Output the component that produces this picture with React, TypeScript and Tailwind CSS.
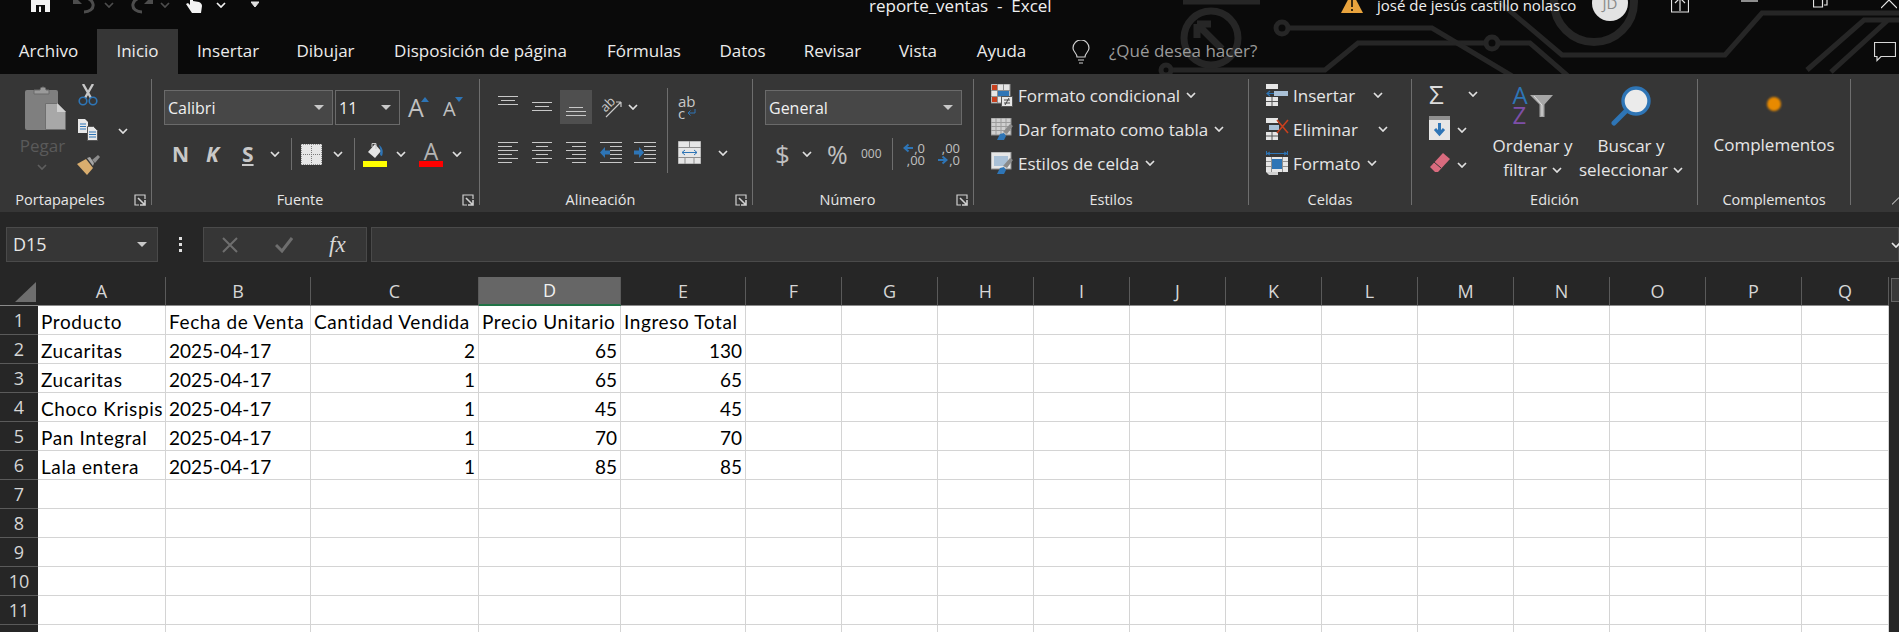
import React from "react";

const ui = "font-['Open_Sans',sans-serif]";

function Chev({ className = "text-[#e0e0e0]" }: { className?: string }) {
  return (
    <svg width="10" height="6" viewBox="0 0 10 6" className={`shrink-0 ${className}`}>
      <path d="M1 1l4 4 4-4" stroke="currentColor" strokeWidth="1.7" fill="none" />
    </svg>
  );
}

function Caret() {
  return (
    <svg width="10" height="5" viewBox="0 0 10 5" className="shrink-0">
      <path d="M0 0h10L5 5z" fill="#c8c8c8" />
    </svg>
  );
}

function Launcher() {
  return (
    <svg width="12" height="12" viewBox="0 0 12 12" className="shrink-0">
      <path d="M11 5V1H1v10h4" stroke="#d0d0d0" strokeWidth="1.2" fill="none" />
      <path d="M4 4l7 7M6 11h5V6" stroke="#d0d0d0" strokeWidth="1.6" fill="none" />
    </svg>
  );
}

function Group({ w, label, launcher, children }: { w: string; label: string; launcher?: boolean; children: React.ReactNode }) {
  return (
    <div className="flex shrink-0">
      <div className={`flex flex-col ${w}`}>
        <div className="h-[111px]">{children}</div>
        <div className="flex h-[20px] items-center">
          <span className="flex-1 text-center text-[14.500px] leading-none text-[#e6e6e6]">{label}</span>
          {launcher && (
            <span className="ml-[14px] mr-[5px] flex">
              <Launcher />
            </span>
          )}
        </div>
      </div>
      <div className="h-[126px] w-px bg-[#6e6e6e]" />
    </div>
  );
}

// horizontal text-alignment lines
function Lines({ rows, color = "#c8c8c8", w = 20, h = 35 }: { rows: number[][]; color?: string; w?: number; h?: number }) {
  return (
    <svg width={w} height={h} viewBox={`0 0 ${w} ${h}`} className="shrink-0">
      {rows.map(([y, a, b], i) => (
        <path key={i} d={`M${a} ${y + 0.5}H${b}`} stroke={color} />
      ))}
    </svg>
  );
}

function Clipboard() {
  return (
    <svg width="41" height="45" viewBox="0 0 41 45">
      <rect x="0" y="5" width="33" height="40" rx="2" fill="#7f7f7f" />
      <path d="M9 9V5h6a3 3 0 0 1 6 0h3v4z" fill="#9a9a9a" stroke="#6a6a6a" />
      <path d="M20.5 18.5h12l8 8v18h-20z" fill="#a8a8a8" stroke="#6f6f6f" />
      <path d="M32 18v9h9z" fill="#d0d0d0" />
    </svg>
  );
}

function Scissors() {
  return (
    <svg width="20" height="22" viewBox="0 0 20 22">
      <path d="M5 0l8 14M15 0L7 14" stroke="#c8c8c8" strokeWidth="2.4" />
      <circle cx="5" cy="17" r="3.8" fill="none" stroke="#2e75b6" strokeWidth="1.6" />
      <circle cx="15" cy="17" r="3.8" fill="none" stroke="#2e75b6" strokeWidth="1.6" />
    </svg>
  );
}

function CopyIcon() {
  return (
    <svg width="20" height="22" viewBox="0 0 20 22">
      <path d="M0 0h7l3 3v11H0z" fill="#e8e8e8" />
      <path d="M2 5h6M2 7.5h6M2 10h6" stroke="#2e75b6" />
      <path d="M9.500 7.500h6l4 4v10h-10z" fill="#e8e8e8" stroke="#555" />
      <path d="M11 13h7M11 15.500h7M11 18h7" stroke="#2e75b6" />
    </svg>
  );
}

function Brush() {
  return (
    <svg width="23" height="20" viewBox="0 0 23 20">
      <path d="M0 9l9-5 7 9-6 7z" fill="#d9ad6e" />
      <path d="M10 3l3-1 4 6-1 3z" fill="#a6a6a6" />
      <path d="M15 5l6-5 2 2-5 6z" fill="#8c8c8c" />
    </svg>
  );
}

function BordersIcon() {
  return (
    <svg width="21" height="21" viewBox="0 0 21 21">
      <rect width="21" height="21" fill="#e6e6e6" />
      <path d="M10.500 0v21M0 10.500h21" stroke="#7a7a7a" strokeDasharray="1 1" />
      <path d="M.5 0v21M20.500 0v21M0 .5h21M0 20.500h21" stroke="#8f8f8f" strokeDasharray="1 1" />
    </svg>
  );
}

function Bucket() {
  return (
    <svg width="18" height="18" viewBox="0 0 18 18">
      <path d="M2 10l7-8 6 7-6 7z" fill="#e6e6e6" />
      <path d="M6 5V1.500h4V7" stroke="#c8c8c8" fill="none" />
      <path d="M13 3c3 2 5 6 3 11-1 0-2-1-2-2 1-3 0-6-1-9z" fill="#2e75b6" />
    </svg>
  );
}

function Orientation() {
  return (
    <svg width="22" height="22" viewBox="0 0 22 22">
      <path d="M5 21L20 6M20 6h-5M20 6v5" stroke="#c8c8c8" strokeWidth="1.2" fill="none" />
      <g fontSize="13" fill="#c8c8c8" transform="rotate(-45 8 9)" fontFamily="Open Sans">
        <text x="0" y="12">ab</text>
      </g>
    </svg>
  );
}

function Outdent({ flip }: { flip?: boolean }) {
  return (
    <svg width="22" height="21" viewBox="0 0 22 21" className="shrink-0">
      <path d="M0 .5h22M10 4.500h12M10 8.500h12M10 12.500h12M10 16.500h12M0 20.500h22" stroke="#c8c8c8" />
      {flip ? (
        <path d="M0 8.500h5V5l5 5.500-5 5.500v-3.500H0z" fill="#2e75b6" />
      ) : (
        <path d="M10 8.500H5V5L0 10.500 5 16v-3.500h5z" fill="#2e75b6" />
      )}
    </svg>
  );
}

function MergeIcon() {
  return (
    <svg width="23" height="23" viewBox="0 0 23 23" className="shrink-0">
      <rect width="23" height="23" fill="#e6e6e6" stroke="#8f8f8f" />
      <path d="M0 6.500h23M0 16.500h23M11.500 0v6M7 17v6M16 17v6" stroke="#8f8f8f" />
      <path d="M4 11.500h15M7 9l-3 2.500L7 14M16 9l3 2.500L16 14" stroke="#2e75b6" fill="none" />
    </svg>
  );
}

function CondFormat() {
  return (
    <svg width="22" height="23" viewBox="0 0 22 23" className="shrink-0">
      <rect width="19" height="19" fill="#e6e6e6" stroke="#8f8f8f" />
      <path d="M6.500 0v19M12.500 0v19M0 6.500h19M0 12.500h19" stroke="#8f8f8f" />
      <rect x="1" y="1" width="5" height="5" fill="#c8401e" />
      <rect x="1" y="13" width="5" height="5" fill="#c8401e" />
      <rect x="7" y="7" width="11" height="5" fill="#2e75b6" />
      <rect x="10.500" y="12.500" width="11" height="10" fill="#e6e6e6" stroke="#555" />
      <path d="M13 16h6M13 19h6M18 14l-4 7" stroke="#444" />
    </svg>
  );
}

function TableFormat({ plain }: { plain?: boolean }) {
  return (
    <svg width="22" height="22" viewBox="0 0 22 22" className="shrink-0">
      <rect width="20" height="17" fill={plain ? "#e6e6e6" : "#d0d0d0"} stroke="#8f8f8f" />
      {plain ? (
        <rect x="3" y="4" width="14" height="10" fill="#a9c0d6" />
      ) : (
        <path d="M0 4.500h20M0 8.500h20M0 12.500h20M5 0v17M10 0v17M15 0v17" stroke="#9c9c9c" />
      )}
      <path d="M12 14l7-8 3 2-6 8z" fill="#8a8a8a" />
      <path d="M6 22l3-6 4-1 2 3-2 4z" fill="#2e75b6" />
    </svg>
  );
}

function InsertIcon() {
  return (
    <svg width="22" height="22" viewBox="0 0 22 22" className="shrink-0">
      <path d="M0 0h12v5H0zM0 13h12v9H0z" fill="#e6e6e6" />
      <path d="M0 17.500h12M6 13v9" stroke="#555" />
      <rect x="8" y="7" width="14" height="5" fill="#a9c0d6" />
      <path d="M8 9.500H1M4 7L1 9.500 4 12" stroke="#2e75b6" strokeWidth="1.2" fill="none" />
    </svg>
  );
}

function DeleteIcon() {
  return (
    <svg width="23" height="22" viewBox="0 0 23 22" className="shrink-0">
      <path d="M0 0h12v5H0zM0 14h12v8H0z" fill="#e6e6e6" />
      <path d="M0 18h12M6 14v8" stroke="#555" />
      <rect x="3" y="7" width="10" height="5" fill="#a9c0d6" />
      <path d="M11 2l11 13M22 2L11 15" stroke="#c8401e" strokeWidth="1.6" />
    </svg>
  );
}

function FormatIcon() {
  return (
    <svg width="22" height="24" viewBox="0 0 22 24" className="shrink-0">
      <path d="M.5 0v4M21.500 0v4M1 2.500h20M4 1L1 2.500 4 4M18 1l3 1.500L18 4" stroke="#2e75b6" fill="none" />
      <rect x="0" y="6" width="22" height="15" fill="#e6e6e6" />
      <path d="M5.500 6v15M16.500 6v15M0 10.500h22M0 15.500h22" stroke="#8f8f8f" />
      <rect x="6" y="8" width="10" height="10" fill="#2e75b6" />
      <path d="M0 21h12v3H3z" fill="#d0d0d0" />
    </svg>
  );
}

function Funnel() {
  return (
    <svg width="23" height="22" viewBox="0 0 23 22">
      <path d="M0 0h23l-8.500 9.500V22h-5V9.500z" fill="#a6a6a6" />
      <path d="M4 1l8 9v11" stroke="#e0e0e0" fill="none" />
    </svg>
  );
}

function Search() {
  return (
    <svg width="40" height="40" viewBox="0 0 40 40">
      <circle cx="25" cy="15" r="13" fill="#ebebeb" stroke="#2e75b6" strokeWidth="3.4" />
      <path d="M15 25L3 37" stroke="#2e75b6" strokeWidth="5" strokeLinecap="round" />
    </svg>
  );
}

function Eraser() {
  return (
    <svg width="21" height="20" viewBox="0 0 21 20">
      <path d="M14 0l7 6L9 19H6l-5-5z" fill="#d96b7e" />
      <path d="M5 9l7 6" stroke="#363636" />
    </svg>
  );
}

function BlueArrow({ right }: { right?: boolean }) {
  return (
    <svg width="10" height="10" viewBox="0 0 10 10" className="shrink-0">
      <path d={right ? "M0 5h8M4.500 1.500L8.500 5l-4 3.500" : "M10 5H2M5.500 1.500L1.500 5l4 3.500"} stroke="#2e75b6" strokeWidth="2" fill="none" />
    </svg>
  );
}

function Portapapeles() {
  return (
    <div className="flex">
      <div className="ml-[25px] flex w-[41px] flex-col items-center pt-[6px]">
        <Clipboard />
        <span className="-ml-[6px] mt-[5px] text-[17px] leading-[22px] text-[#5a5a5a]">Pegar</span>
        <span className="-ml-[8px] mt-[7px]"><Chev className="text-[#5e5e5e]" /></span>
      </div>
      <div className="ml-[12px] flex w-[23px] flex-col items-start pt-[5px]">
        <Scissors />
        <span className="mt-[13px]"><CopyIcon /></span>
        <span className="-ml-px mt-[14px]"><Brush /></span>
      </div>
      <div className="ml-[17px] pt-[49px]">
        <Chev />
      </div>
    </div>
  );
}

function Fuente() {
  return (
    <div className="flex flex-col pt-[11px]">
      <div className="flex h-[35px] items-start pl-[12px]">
        <div className="flex h-[35px] w-[169px] items-center justify-between border border-[#6a6a6a] bg-[#474747] pl-[3px] pr-[8px] text-[16px] text-[#f0f0f0]">
          Calibri
          <Caret />
        </div>
        <div className="ml-[2px] flex h-[35px] w-[65px] items-center justify-between border border-[#6a6a6a] pl-[3px] pr-[8px] text-[16px] text-[#f0f0f0]">
          11
          <Caret />
        </div>
        <div className="ml-[8px] flex h-[35px] w-[13px] items-center text-[25px] font-medium leading-none text-[#c0c0c0]">A</div>
        <svg width="8" height="5" viewBox="0 0 8 5" className="mt-[7px]"><path d="M0 5l4-5 4 5z" fill="#2e75b6" /></svg>
        <div className="ml-[14px] flex h-[35px] w-[12px] items-center pt-[2px] text-[20px] font-medium leading-none text-[#c0c0c0]">A</div>
        <svg width="8" height="5" viewBox="0 0 8 5" className="mt-[7px]"><path d="M0 0h8L4 5z" fill="#2e75b6" /></svg>
      </div>
      <div className="mt-[13px] flex h-[32px] items-center pl-[20px] text-[#c8c8c8]">
        <span className="w-[15px] text-[21px] font-bold leading-none">N</span>
        <span className="ml-[19px] w-[15px] text-[21px] font-bold italic leading-none">K</span>
        <span className="ml-[21px] w-[12px] text-[21px] font-bold leading-none underline underline-offset-2">S</span>
        <span className="ml-[16px]"><Chev /></span>
        <div className="ml-[11px] h-[32px] w-px bg-[#6e6e6e]" />
        <span className="ml-[9px]"><BordersIcon /></span>
        <span className="ml-[11px]"><Chev /></span>
        <div className="ml-[11px] h-[32px] w-px bg-[#6e6e6e]" />
        <div className="ml-[8px] flex w-[24px] flex-col items-center">
          <Bucket />
          <div className="mt-px h-[6px] w-[24px] bg-[#ffff00]" />
        </div>
        <span className="ml-[9px]"><Chev /></span>
        <div className="ml-[13px] flex w-[24px] flex-col items-center">
          <span className="h-[18px] text-[23px] font-normal leading-[18px] text-[#b4b4b4]">A</span>
          <div className="mt-px h-[6px] w-[24px] bg-[#ff0000]" />
        </div>
        <span className="ml-[9px]"><Chev /></span>
      </div>
    </div>
  );
}

const sixLines = (o: number[][]) => o.map(([a, b], i) => [i * 4, a, b]);

function Alineacion() {
  return (
    <div className="flex pt-[11px]">
      <div className="flex flex-col">
        <div className="flex h-[35px] items-start pl-[18px]">
          <Lines rows={[[6, 0, 20], [10, 3, 17], [14, 0, 20]]} />
          <span className="ml-[14px]"><Lines rows={[[12, 0, 20], [16, 3, 17], [20, 0, 20]]} /></span>
          <div className="ml-[8px] flex h-[34px] w-[32px] justify-center bg-[#4f4f4f]">
            <Lines rows={[[17, 3, 17], [21, 0, 20], [25, 0, 20]]} />
          </div>
          <span className="ml-[9px] mt-[6px]"><Orientation /></span>
          <span className="ml-[5px] mt-[14px]"><Chev /></span>
        </div>
        <div className="mt-[17px] flex items-start pl-[18px]">
          <Lines h={21} rows={sixLines([[0, 20], [0, 14], [0, 20], [0, 14], [0, 20], [0, 14]])} />
          <span className="ml-[14px]"><Lines h={21} rows={sixLines([[0, 20], [4, 16], [0, 20], [4, 16], [0, 20], [4, 16]])} /></span>
          <span className="ml-[14px]"><Lines h={21} rows={sixLines([[0, 20], [6, 20], [0, 20], [6, 20], [0, 20], [6, 20]])} /></span>
          <span className="ml-[14px]"><Outdent /></span>
          <span className="ml-[12px]"><Outdent flip /></span>
        </div>
      </div>
      <div className="ml-[11px] -mt-[2px] h-[85px] w-px shrink-0 bg-[#6e6e6e]" />
      <div className="ml-[10px] flex flex-col">
        <div className="flex h-[35px] flex-col pt-[5px] text-[15px] leading-[12px] text-[#c8c8c8]">
          <span>ab</span>
          <span className="flex items-center">c<span className="ml-[2px]"><svg width="9" height="8" viewBox="0 0 9 8"><path d="M8 0v4H1M3.500 1.500L1 4l2.500 2.500" stroke="#2e75b6" fill="none" /></svg></span></span>
        </div>
        <div className="mt-[16px] flex items-center">
          <MergeIcon />
          <span className="ml-[17px]"><Chev /></span>
        </div>
      </div>
    </div>
  );
}

function Numero() {
  return (
    <div className="flex flex-col pt-[11px]">
      <div className="ml-[12px] flex h-[35px] w-[197px] items-center justify-between border border-[#6a6a6a] bg-[#474747] pl-[3px] pr-[8px] text-[16px] text-[#f0f0f0]">
        General
        <Caret />
      </div>
      <div className="mt-[13px] flex h-[32px] items-center pl-[22px] text-[#c0c0c0]">
        <span className="w-[13px] text-[26px] leading-none">$</span>
        <span className="ml-[14px]"><Chev /></span>
        <span className="ml-[15px] w-[22px] text-[25px] leading-none">%</span>
        <span className="ml-[12px] w-[22px] text-[12px] leading-none">000</span>
        <div className="ml-[9px] h-[32px] w-px bg-[#6e6e6e]" />
        <div className="ml-[8px] flex w-[24px] flex-col items-end text-[13px] leading-[12px]">
          <span className="flex items-center"><BlueArrow /><span className="ml-px">,0</span></span>
          <span>,00</span>
        </div>
        <div className="ml-[11px] flex w-[24px] flex-col items-end text-[13px] leading-[12px]">
          <span>,00</span>
          <span className="flex items-center"><BlueArrow right /><span className="ml-px">,0</span></span>
        </div>
      </div>
    </div>
  );
}

function Estilos() {
  const rows: [React.ReactNode, string][] = [
    [<CondFormat />, "Formato condicional"],
    [<TableFormat />, "Dar formato como tabla"],
    [<TableFormat plain />, "Estilos de celda"],
  ];
  return (
    <div className="-mt-px flex flex-col pl-[17px] text-[17px] text-[#e6e6e6]">
      {rows.map(([icon, label]) => (
        <div key={label} className="flex h-[34px] items-center">
          <span className="flex w-[27px]">{icon}</span>
          <span className="leading-none">{label}</span>
          <span className="ml-[6px]"><Chev /></span>
        </div>
      ))}
    </div>
  );
}

function Celdas() {
  const rows: [React.ReactNode, string, string][] = [
    [<InsertIcon />, "Insertar", "ml-[18px]"],
    [<DeleteIcon />, "Eliminar", "ml-[20px]"],
    [<FormatIcon />, "Formato", "ml-[7px]"],
  ];
  return (
    <div className="-mt-px flex flex-col pl-[17px] text-[17px] text-[#e6e6e6]">
      {rows.map(([icon, label, chev]) => (
        <div key={label} className="flex h-[34px] items-center">
          <span className="flex w-[27px]">{icon}</span>
          <span className="leading-none">{label}</span>
          <span className={chev}><Chev /></span>
        </div>
      ))}
    </div>
  );
}

function Edicion() {
  return (
    <div className="flex">
      <div className="ml-[17px] flex w-[60px] flex-col">
        <div className="flex h-[30px] items-center">
          <span className="w-[20px] text-[26px] leading-none text-[#dcdcdc]">Σ</span>
          <span className="ml-[19px]"><Chev /></span>
        </div>
        <div className="mt-[7px] flex h-[24px] items-center">
          <svg width="21" height="24" viewBox="0 0 21 24">
            <rect width="21" height="24" fill="#e6e6e6" />
            <rect width="21" height="4" fill="#8f8f8f" />
            <path d="M10.500 7v11M6 13l4.500 5 4.500-5" stroke="#2e75b6" strokeWidth="3" fill="none" />
          </svg>
          <span className="ml-[7px] mt-[3px]"><Chev /></span>
        </div>
        <div className="mt-[13px] flex h-[20px] items-center">
          <Eraser />
          <span className="ml-[7px] mt-[3px]"><Chev /></span>
        </div>
      </div>
      <div className="ml-[4px] flex w-[79px] flex-col items-center">
        <div className="flex h-[53px] pt-[6px]">
          <div className="flex flex-col text-[24px] leading-[20px]">
            <span className="text-[#2e75b6]">A</span>
            <span className="text-[#7e4fa8]">Z</span>
          </div>
          <span className="ml-[2px] mt-[10px]"><Funnel /></span>
        </div>
        <span className="mt-[2px] whitespace-nowrap text-[17px] leading-[24px] text-[#e6e6e6]">Ordenar y</span>
        <span className="flex items-center text-[17px] leading-[24px] text-[#e6e6e6]">filtrar<span className="ml-[5px]"><Chev /></span></span>
      </div>
      <div className="flex w-[118px] flex-col items-center">
        <div className="h-[53px] pt-[7px]">
          <Search />
        </div>
        <span className="mt-[2px] text-[17px] leading-[24px] text-[#e6e6e6]">Buscar y</span>
        <span className="flex items-center text-[17px] leading-[24px] text-[#e6e6e6]">seleccionar<span className="ml-[5px]"><Chev /></span></span>
      </div>
    </div>
  );
}

function Complementos() {
  return (
    <div className="flex flex-col items-center">
      <div className="mt-[18px] h-[14px] w-[14px] rounded-full bg-[#e88a00] blur-[1px]" />
      <span className="mt-[22px] text-[17px] leading-[24px] text-[#e6e6e6]">Complementos</span>
    </div>
  );
}

function Circuit() {
  return (
    <svg width="1899" height="74" viewBox="0 0 1899 74" className="absolute left-0 top-0" fill="none" stroke="#262626" strokeWidth="5">
      <path d="M1183 2H1260M1171 70H1325L1358 43H1486" />
      <circle cx="1166" cy="70" r="5" />
      <circle cx="1211" cy="38" r="27" strokeWidth="7" />
      <path d="M1200 27l22 22M1197 24h14M1197 24v14" strokeWidth="7" />
      <circle cx="1282" cy="28" r="6" />
      <path d="M1288 28H1432L1512 76" />
      <circle cx="1492" cy="43" r="6" />
      <path d="M1498 43H1530L1568 76M1497 0L1562 55H1725L1762 13H1899" />
      <circle cx="1594" cy="2" r="40" strokeWidth="8" />
      <path d="M1807 70L1864 20H1899M1831 72L1888 20" />
    </svg>
  );
}

function TitleRow() {
  // svgs use a viewBox shifted 10px up, the window's top edge is cropped off
  return (
    <div className="h-[29px] overflow-hidden">
      <div className="-mt-[10px] flex h-[30px] items-center pl-[31px]">
        <svg width="19" height="30" viewBox="0 -10 19 30">
          <path d="M0-8h15l4 4v16H0z" fill="#f2f2f2" />
          <path d="M5 5h9v7H5z" fill="#0a0a0a" />
          <path d="M8 6.500h2V12H8z" fill="#f2f2f2" />
        </svg>
        <svg width="22" height="30" viewBox="0 -10 22 30" className="ml-[23px]">
          <path d="M1 1c4-5 17-5 19 3 1 5-4 8-9 8" stroke="#4d4d4d" strokeWidth="3" fill="none" />
          <path d="M0 -5v9h9" fill="#4d4d4d" />
        </svg>
        <span className="ml-[9px]"><Chev className="text-[#4d4d4d]" /></span>
        <svg width="22" height="30" viewBox="0 -10 22 30" className="ml-[17px]">
          <path d="M21 1c-4-5-17-5-19 3-1 5 4 8 9 8" stroke="#4d4d4d" strokeWidth="3" fill="none" />
          <path d="M22 -5v9h-9" fill="#4d4d4d" />
        </svg>
        <span className="ml-[7px]"><Chev className="text-[#4d4d4d]" /></span>
        <svg width="16" height="30" viewBox="0 -10 16 30" className="ml-[16px]">
          <path d="M4-8h3v9l6 1c2 1 3 2 3 4l-1 7H6L0 4l2-1 2 2z" fill="#f2f2f2" />
        </svg>
        <span className="ml-[14px]"><Chev className="text-[#f2f2f2]" /></span>
        <svg width="8" height="30" viewBox="0 -10 8 30" className="ml-[25px]">
          <path d="M0-2h8M0 2h8L4 7z" stroke="#e0e0e0" fill="#e0e0e0" />
        </svg>
        <span className="ml-[610px] w-[180px] whitespace-pre text-center text-[17px] leading-none text-[#f0f0f0]">reporte_ventas  -  Excel</span>
        <svg width="22" height="30" viewBox="0 -10 22 30" className="ml-[292px]">
          <path d="M11-8L22 13H0z" fill="#e8a33d" />
          <path d="M11-1v8M11 9v2" stroke="#3a2a10" strokeWidth="2" />
        </svg>
        <span className="ml-[14px] w-[202px] whitespace-nowrap text-[15px] leading-none text-[#f0f0f0]">josé de jesús castillo nolasco</span>
        <div className="ml-[13px] flex h-[36px] w-[36px] shrink-0 -translate-y-[2px] items-center justify-center rounded-full bg-[#e3e3e3] text-[15px] text-[#8a8a8a]">JD</div>
        <svg width="18" height="30" viewBox="0 -10 18 30" className="ml-[43px]">
          <path d="M.5-4v16h17V-4M9 11V-2M4 3l5-5 5 5" stroke="#e6e6e6" strokeWidth="1.2" fill="none" />
        </svg>
        <svg width="17" height="30" viewBox="0 -10 17 30" className="ml-[52px]">
          <path d="M0 1h17" stroke="#e6e6e6" strokeWidth="1.2" />
        </svg>
        <svg width="15" height="30" viewBox="0 -10 15 30" className="ml-[55px]">
          <path d="M.5-2v9h9v-9zM3-5h11v10h-3" stroke="#e6e6e6" strokeWidth="1.2" fill="none" />
        </svg>
        <svg width="16" height="30" viewBox="0 -10 16 30" className="ml-[53px]">
          <path d="M0-8l16 16M16-8L0 8" stroke="#e6e6e6" strokeWidth="1.2" />
        </svg>
      </div>
    </div>
  );
}

const tabs: [string, string][] = [
  ["Archivo", "w-[97px]"],
  ["Inicio", "w-[81px] bg-[#363636]"],
  ["Insertar", "w-[100px]"],
  ["Dibujar", "w-[95px]"],
  ["Disposición de página", "w-[215px]"],
  ["Fórmulas", "w-[112px]"],
  ["Datos", "w-[85px]"],
  ["Revisar", "w-[95px]"],
  ["Vista", "w-[76px]"],
  ["Ayuda", "w-[91px]"],
];

function TabRow() {
  return (
    <div className="flex h-[45px] items-stretch text-[17px] text-[#ececec]">
      {tabs.map(([name, cls]) => (
        <div key={name} className={`flex items-center justify-center pb-[2px] ${cls}`}>{name}</div>
      ))}
      <svg width="18" height="24" viewBox="0 0 18 24" className="ml-[25px] mt-[11px]" fill="none" stroke="#d0d0d0" strokeWidth="1.2">
        <path d="M5 17c0-4-4-5-4-9a8 8 0 0 1 16 0c0 4-4 5-4 9z" />
        <path d="M6 20h6M7 23h4" />
      </svg>
      <span className="ml-[19px] flex w-[150px] items-center whitespace-nowrap pb-[2px] text-[#9a9a9a]">¿Qué desea hacer?</span>
      <svg width="22" height="20" viewBox="0 0 22 20" className="ml-auto mr-[3px] mt-[13px]" fill="none" stroke="#d8d8d8" strokeWidth="1.2">
        <path d="M.5.5h21v14H7l-4 4v-4H.5z" />
      </svg>
    </div>
  );
}

function FormulaBar() {
  return (
    <div className="flex h-[65px] items-start bg-[#262626] pl-[6px] pt-[15px]">
      <div className="flex h-[35px] w-[152px] items-center justify-between border border-[#4a4a4a] bg-[#363636] pl-[6px] pr-[10px] text-[18px] text-[#e6e6e6]">
        D15
        <Caret />
      </div>
      <div className="ml-[20px] flex h-[35px] w-[4px] flex-col items-center justify-center gap-[3px]">
        <span className="h-[3px] w-[3px] bg-[#e0e0e0]" />
        <span className="h-[3px] w-[3px] bg-[#e0e0e0]" />
        <span className="h-[3px] w-[3px] bg-[#e0e0e0]" />
      </div>
      <div className="ml-[21px] flex h-[35px] w-[164px] items-center border border-[#4a4a4a] bg-[#363636] pl-[18px]">
        <svg width="16" height="16" viewBox="0 0 16 16"><path d="M1 1l14 14M15 1L1 15" stroke="#6e6e6e" strokeWidth="2" /></svg>
        <svg width="18" height="16" viewBox="0 0 18 16" className="ml-[37px]"><path d="M1 8l6 6L17 1" stroke="#6e6e6e" strokeWidth="3" fill="none" /></svg>
        <span className="ml-[36px] font-['Liberation_Serif',serif] text-[23px] italic leading-none text-[#d8d8d8]">fx</span>
      </div>
      <div className="ml-[4px] flex h-[35px] flex-1 items-center justify-end border border-[#4a4a4a] bg-[#363636]">
        <Chev className="-mr-[3px] text-[#e6e6e6]" />
      </div>
    </div>
  );
}

const colWidths = [128, 145, 168, 142, 125, 96, 96, 96, 96, 96, 96, 96, 96, 96, 96, 96, 87];
const letters = "ABCDEFGHIJKLMNOPQ".split("");

const data: (string | number)[][] = [
  ["Producto", "Fecha de Venta", "Cantidad Vendida", "Precio Unitario", "Ingreso Total"],
  ["Zucaritas", "2025-04-17", 2, 65, 130],
  ["Zucaritas", "2025-04-17", 1, 65, 65],
  ["Choco Krispis", "2025-04-17", 1, 45, 45],
  ["Pan Integral", "2025-04-17", 1, 70, 70],
  ["Lala entera", "2025-04-17", 1, 85, 85],
];

function cellAlign(v: string | number | undefined) {
  if (typeof v === "number") return "justify-end";
  if (v && !/^\d/.test(v)) return "tracking-[0.6px]";
  return "";
}

function Sheet() {
  return (
    <div className="flex bg-[#262626]">
      <div className="w-[1889px] shrink-0">
        <div className="flex h-[29px]">
          <div className="flex w-[38px] items-end justify-end border-b border-[#8a8a8a] pb-[3px] pr-[2px]">
            <svg width="21" height="20" viewBox="0 0 21 20"><path d="M21 0v20H0z" fill="#6e6e6e" /></svg>
          </div>
          {letters.map((l, i) => (
            <div
              key={l}
              style={{ width: colWidths[i] }}
              className={`flex items-center justify-center border-r border-[#5a5a5a] text-[18px] text-[#d6d6d6] ${l === "D" ? "border-b-2 border-b-[#217346] bg-[#666666] text-[#f0f0f0]" : "border-b border-b-[#8a8a8a]"}`}
            >
              {l}
            </div>
          ))}
        </div>
        {Array.from({ length: 12 }, (_, r) => (
          <div key={r} className="flex h-[29px]">
            <div className="flex w-[38px] items-center justify-center border-b border-[#5a5a5a] text-[18px] text-[#d6d6d6]">{r + 1}</div>
            {colWidths.map((w, c) => {
              const v = data[r]?.[c];
              return (
                <div
                  key={c}
                  style={{ width: w }}
                  className={`flex items-center whitespace-nowrap border-b border-r border-[#d4d4d4] bg-white px-[3px] pt-[3px] font-['Lato',sans-serif] text-[19px] leading-none text-black ${cellAlign(v)}`}
                >
                  {v}
                </div>
              );
            })}
          </div>
        ))}
      </div>
      <div className="ml-[2px] flex-1 pt-px">
        <div className="h-[24px] border border-r-0 border-[#666666] bg-[#3a3a3a]" />
      </div>
    </div>
  );
}

export default function App() {
  return (
    <div className={`h-[632px] w-[1899px] overflow-hidden bg-[#262626] ${ui}`}>
      <div className="relative h-[74px] overflow-hidden bg-[#0a0a0a]">
        <Circuit />
        <div className="relative">
          <TitleRow />
          <TabRow />
        </div>
      </div>
      <div className="flex h-[138px] bg-[#363636] pt-[5px]">
        <Group w="w-[151px]" label="Portapapeles" launcher><Portapapeles /></Group>
        <Group w="w-[327px]" label="Fuente" launcher><Fuente /></Group>
        <Group w="w-[272px]" label="Alineación" launcher><Alineacion /></Group>
        <Group w="w-[220px]" label="Número" launcher><Numero /></Group>
        <Group w="w-[274px]" label="Estilos"><Estilos /></Group>
        <Group w="w-[162px]" label="Celdas"><Celdas /></Group>
        <Group w="w-[285px]" label="Edición"><Edicion /></Group>
        <Group w="w-[152px]" label="Complementos"><Complementos /></Group>
        <svg width="8" height="8" viewBox="0 0 8 8" className="ml-[41px] mt-[118px]"><path d="M0 8l8-8" stroke="#bdbdbd" strokeWidth="1.2" /></svg>
      </div>
      <FormulaBar />
      <Sheet />
    </div>
  );
}
